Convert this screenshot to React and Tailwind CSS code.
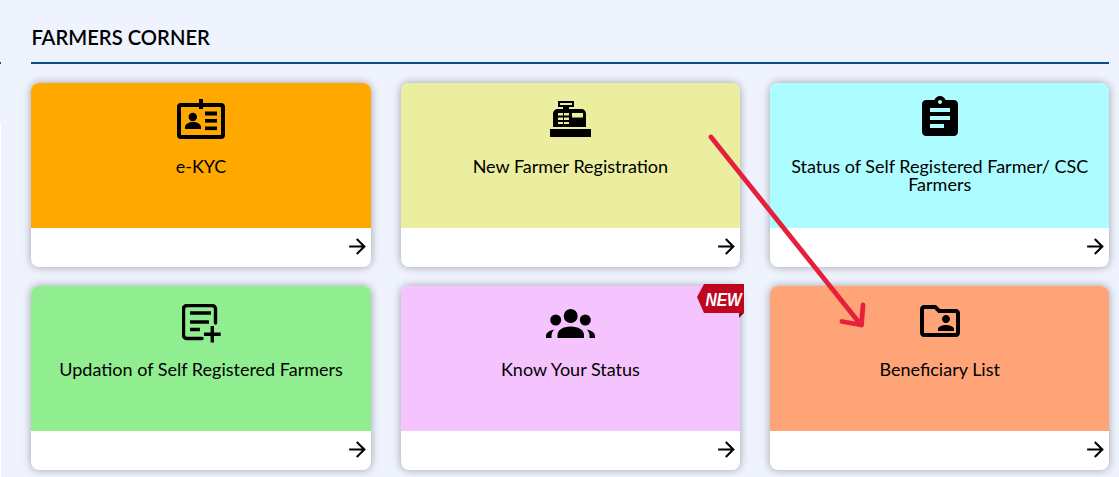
import React from "react";
import { MdAssignment, MdOutlineFolderShared, MdArrowForward } from "react-icons/md";

const IdCard = ({ className }) => (
  <svg viewBox="0 0 48 40" className={className} fill="currentColor">
    <path fillRule="evenodd" d="M4 4h18V0h4v4h18a4 4 0 0 1 4 4v28a4 4 0 0 1-4 4H4a4 4 0 0 1-4-4V8a4 4 0 0 1 4-4Zm.5 4a.5.5 0 0 0-.5.5v27a.5.5 0 0 0 .5.5h39a.5.5 0 0 0 .5-.5v-27a.5.5 0 0 0-.5-.5H26V10h-4V8Z" />
    <circle cx="15.800" cy="18" r="4.200" />
    <path d="M8 30v-2c0-3 4-5 8-5s8 2 8 5v2Z" />
    <rect x="28" y="12.500" width="12" height="4" />
    <rect x="28" y="20" width="12" height="3.600" />
    <rect x="28" y="27.500" width="12" height="3.600" />
  </svg>
);

const Register = ({ className }) => (
  <svg viewBox="0 0 41 36" className={className} fill="currentColor">
    <path fillRule="evenodd" d="M8 0h16v6h-5v2h12c3 0 5 2 5 5v13H3V13c0-3 2-5 5-5h5V6H8Zm2 2v2h12V2Zm12 10v4.500h11V12ZM8 12v2.500h5V12Zm6 0v2.500h5V12ZM8 16.500V19h5v-2.500Zm6 0V19h5v-2.500ZM8 21v2h5v-2Zm6 0v2h5v-2Z" />
    <rect x="0" y="28" width="41" height="8" />
  </svg>
);

const PostAdd = ({ className }) => (
  <svg viewBox="0 0 40 40" className={className} fill="none" stroke="currentColor" strokeWidth="3.400">
    <path d="M33.500 19V5A3.500 3.500 0 0 0 30 1.500H5A3.500 3.500 0 0 0 1.500 5V31A3.500 3.500 0 0 0 5 34.500H20" strokeLinecap="round" />
    <path d="M8 9H29M8 18H27M8 25.500H18M30.300 22V38.500M22 30.300H38.700" />
  </svg>
);

const Groups = ({ className }) => (
  <svg viewBox="0 0 49 29" className={className} fill="currentColor">
    <circle cx="24.700" cy="7" r="7" />
    <circle cx="9.700" cy="11" r="5.500" />
    <circle cx="39.300" cy="11" r="5.500" />
    <path d="M11.500 29v-3c0-5 5.500-8.500 13.200-8.500S38 21 38 26v3Z" />
    <path d="M0 29v-2c0-3 3-5.500 8.500-6.500C6.500 22 5.500 24 5.500 27v2Z" />
    <path d="M49 29v-2c0-3-3-5.500-8.500-6.500C42.500 22 43.500 24 43.500 27v2Z" />
  </svg>
);

const cards = [
  { title: "e-KYC", bg: "bg-[#ffa800]", icon: <IdCard className="w-[48px] h-[40px] mt-[16px]" /> },
  { title: "New Farmer Registration", bg: "bg-[#ebee9f]", icon: <Register className="w-[41px] h-[36px] mt-[18px]" /> },
  { title: "Status of Self Registered Farmer/ CSC Farmers", bg: "bg-[#adfcff]", icon: <MdAssignment className="w-[48px] h-[48px] mt-[11px]" /> },
  { title: "Updation of Self Registered Farmers", bg: "bg-[#90ee90]", icon: <PostAdd className="w-[40px] h-[40px] mt-[18px] ml-[2px]" /> },
  { title: "Know Your Status", bg: "bg-[#f5c4fe]", icon: <Groups className="w-[49px] h-[29px] mt-[23px]" />, isNew: true },
  { title: "Beneficiary List", bg: "bg-[#ffa477]", icon: <MdOutlineFolderShared className="w-[48px] h-[48px] mt-[11px]" /> },
];

const Card = ({ title, bg, icon, isNew }) => (
  <div className="relative h-[184px] rounded-lg bg-white shadow-[0_0_8px_rgba(0,0,0,0.35)] flex flex-col">
    <div className={`${bg} h-[145px] rounded-t-lg flex flex-col items-center px-4 text-center text-black`}>
      <div className="h-[74px] shrink-0">{icon}</div>
      <p className="text-[18px] leading-[18px]">{title}</p>
    </div>
    <div className="flex-1 flex items-center justify-end pr-[1px] pb-[3px] text-black">
      <MdArrowForward className="w-[25px] h-[25px]" />
    </div>
    {isNew && (
      <div className="absolute -top-[2px] -right-[4px]">
        <svg width="47" height="34" viewBox="0 0 47 34" className="block">
          <path d="M42 29h5l-5 5Z" fill="#7d0a1f" />
          <path d="M7 0H47V29H7L0 13Z" fill="#c0061f" />
          <text transform="translate(8.500 21.500) scale(0.820 1)" fontFamily="'Liberation Sans', sans-serif" fontSize="19" fontWeight="700" fontStyle="italic" fill="#fff">NEW</text>
        </svg>
      </div>
    )}
  </div>
);

export default function App() {
  return (
    <div className="relative w-[1119px] h-[477px] overflow-hidden bg-[#eff3fe] pl-[31.400px] pr-[9.600px] font-['Lato','Noto_Sans',sans-serif]">
      <div className="absolute left-0 top-[62px] w-px h-[2px] bg-[#0f4c81]" />
      <div className="absolute left-0 top-[123px] w-px h-[354px] bg-white" />
      <h2 className="h-[64px] pt-[23px] text-[20.200px] leading-[28px] font-semibold text-black border-b-2 border-[#0f4c81]">FARMERS CORNER</h2>
      <div className="grid grid-cols-3 gap-x-[30px] gap-y-[19px] mt-[19px]">
        {cards.map((c) => (
          <Card key={c.title} {...c} />
        ))}
      </div>
      <svg className="absolute left-0 top-0 pointer-events-none" width="1119" height="477" viewBox="0 0 1119 477" fill="none">
        <path d="M711 137 L861 325 M842 321.500 L861.500 325 L863 305" stroke="#e5203d" strokeWidth="4.800" strokeLinecap="round" strokeLinejoin="round" />
      </svg>
    </div>
  );
}
